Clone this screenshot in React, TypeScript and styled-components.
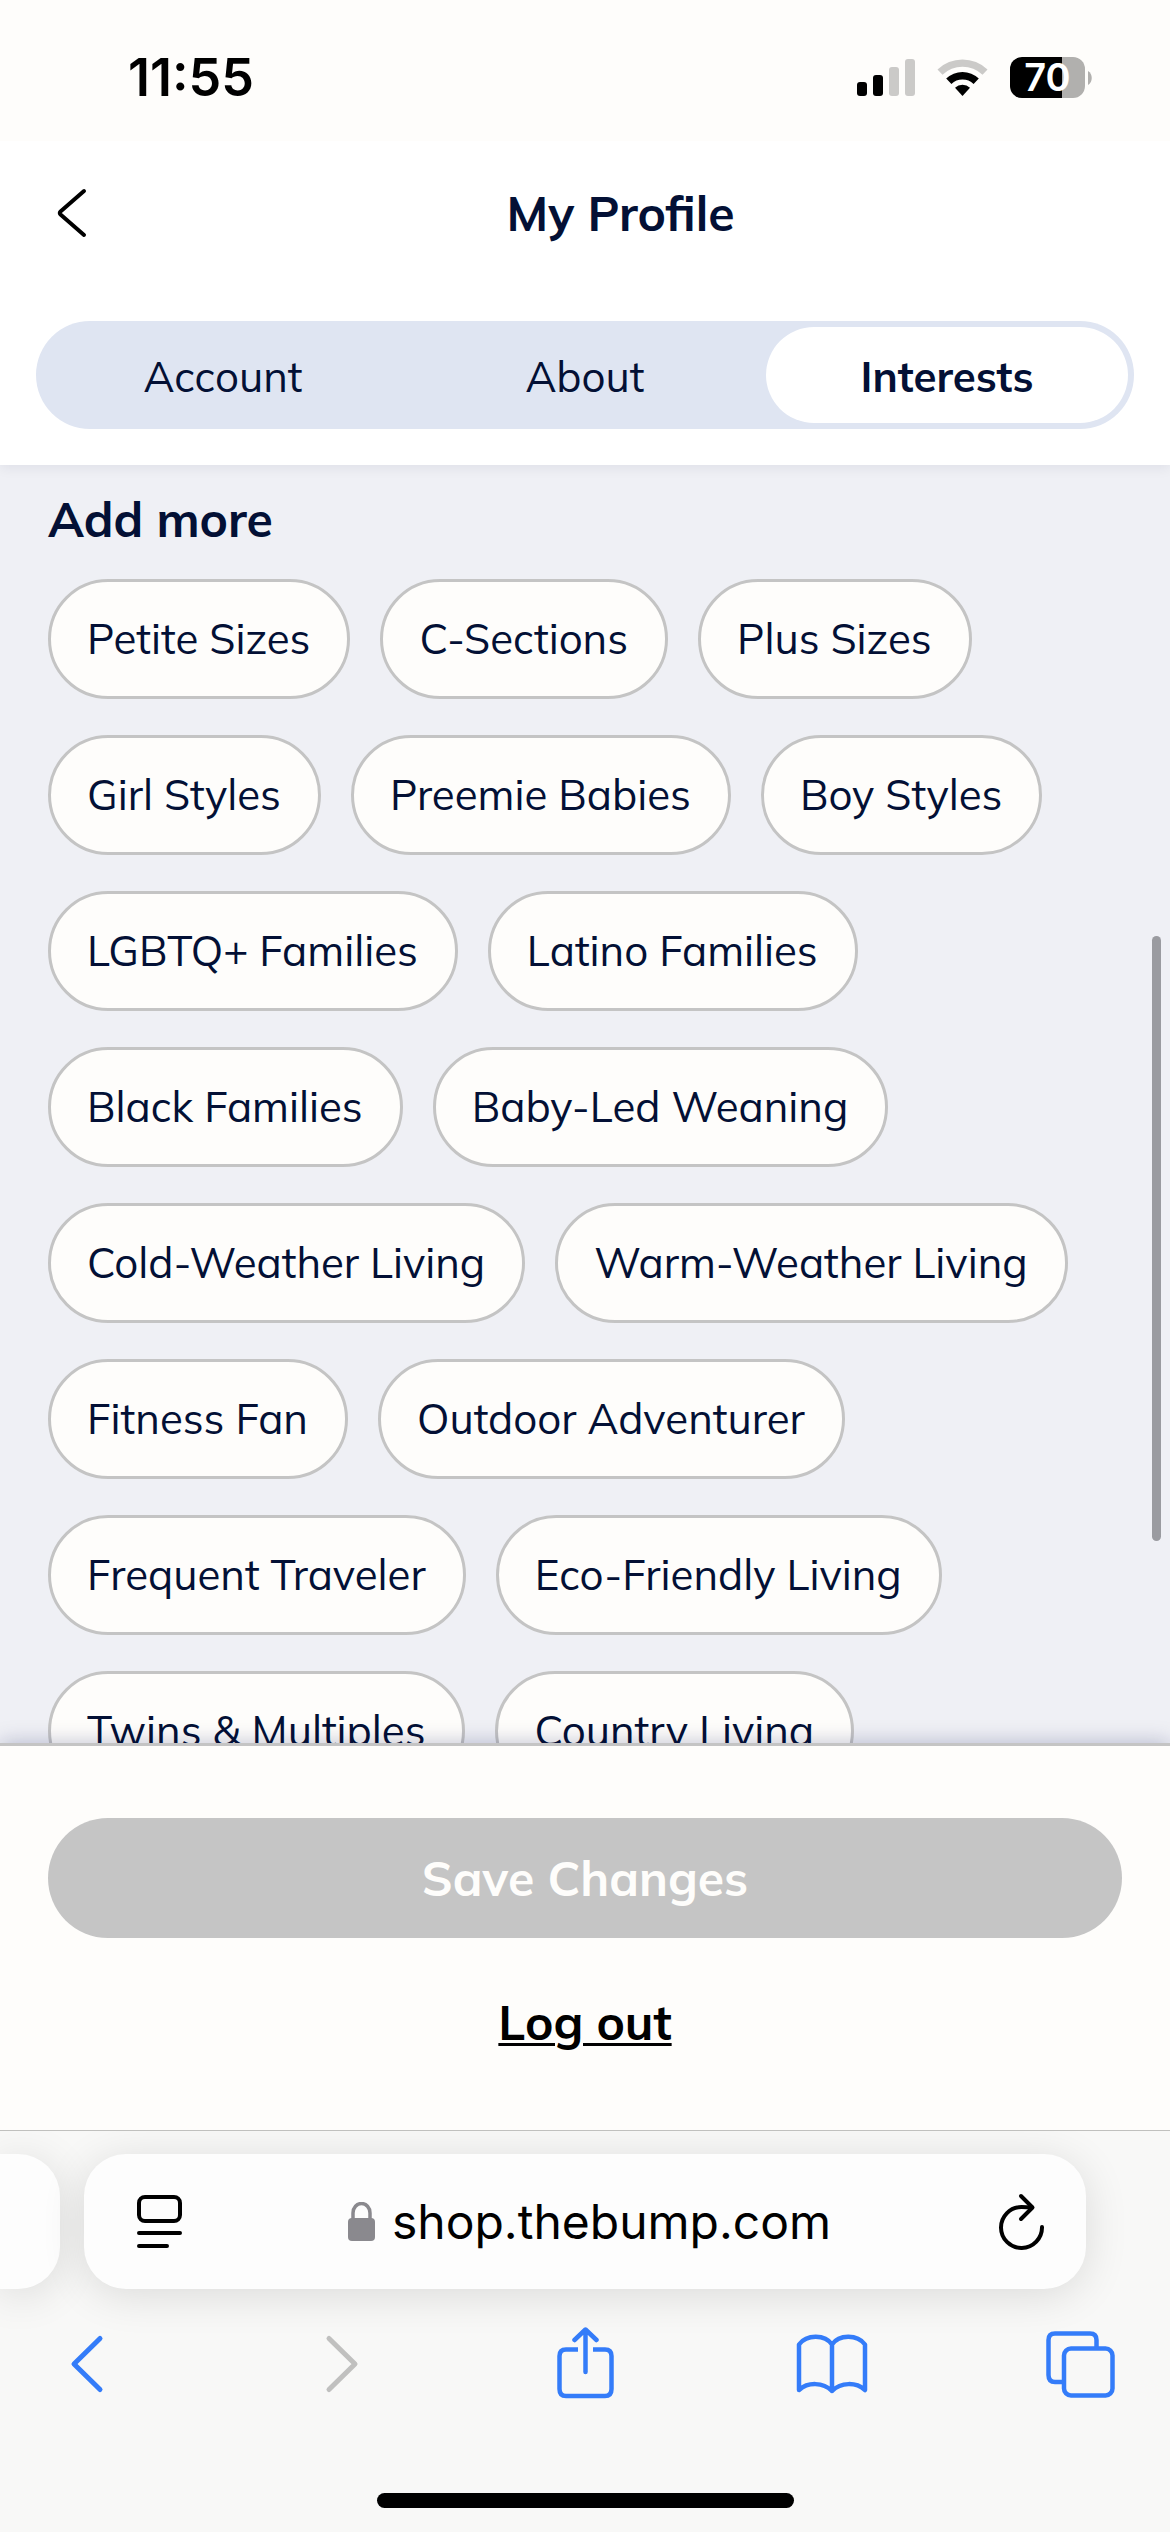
import React, { useState } from 'react';
import styled, { createGlobalStyle, css } from 'styled-components';

const brandFont = "Mulish, 'Open Sans', 'Noto Sans', sans-serif";
const systemFont = "Inter, 'Liberation Sans', sans-serif";

const color = {
  navy: '#031035',
  cream: '#fefdfb',
  border: '#c4c4c4',
  blue: '#347cf9',
  canvas: '#eff0f5',
};

const GlobalStyle = createGlobalStyle`
  *, *::before, *::after { box-sizing: border-box; }
  body { margin: 0; background: ${color.cream}; }
  button { font: inherit; color: inherit; margin: 0; padding: 0; border: 0; background: none; }
  svg { display: block; flex: none; }
`;

const Page = styled.div`
  display: flex;
  flex-direction: column;
  height: 100vh;
  color: ${color.navy};
  font-family: ${brandFont};
`;

const StatusBar = styled.div`
  flex: none;
  position: relative;
  z-index: 2;
  display: flex;
  align-items: center;
  justify-content: space-between;
  height: 141px;
  padding: 14px 78px 0 128px;
  background: ${color.cream};
  color: #000;
  font-family: ${systemFont};
`;

const Clock = styled.time`
  font-size: 52px;
  font-weight: 600;
  line-height: 60px;
`;

const StatusIcons = styled.div`
  display: flex;
  align-items: center;
  gap: 22px;
`;

const Battery = styled.div`
  display: flex;
  align-items: center;
  gap: 3px;
`;

const BatteryBody = styled.div`
  display: flex;
  align-items: center;
  justify-content: center;
  width: 75px;
  height: 41px;
  border-radius: 12px;
  background: linear-gradient(to right, #000 70%, #b1b0ae 70%);
  color: #fff;
  font-size: 38px;
  font-weight: 600;
  line-height: 41px;
`;

const Header = styled.header`
  flex: none;
  position: relative;
  z-index: 1;
  padding: 0 36px 36px;
  background: #fff;
  box-shadow: 0 3px 12px rgba(3, 16, 53, 0.07);
`;

const TitleRow = styled.div`
  display: flex;
  align-items: center;
  height: 144px;
  margin-bottom: 36px;
`;

const BackButton = styled.button`
  display: flex;
  align-items: center;
  width: 71px;
  height: 72px;
  padding-left: 20px;
  color: #000;
`;

const Title = styled.h1`
  flex: 1;
  margin: 0;
  font-size: 48px;
  font-weight: 700;
  line-height: 66px;
  text-align: center;
`;

const Tabs = styled.div`
  display: flex;
  height: 108px;
  padding: 6px;
  border-radius: 54px;
  background: #dfe5f2;
`;

const Tab = styled.button<{ $active: boolean }>`
  flex: 1;
  padding-top: 3px;
  border-radius: 48px;
  font-size: 42px;
  font-weight: 400;
  line-height: 60px;
  ${({ $active }) =>
    $active &&
    css`
      background: #fff;
      font-weight: 700;
    `}
`;

const Content = styled.main`
  flex: 1;
  min-height: 0;
  position: relative;
  background: ${color.canvas};
`;

const Scroller = styled.div`
  height: 100%;
  padding: 21px 48px 36px;
  overflow-y: auto;
  scrollbar-width: none;
`;

const ScrollThumb = styled.div`
  position: absolute;
  top: 471px;
  right: 9px;
  width: 9px;
  height: 605px;
  border-radius: 5px;
  background: #9a9ba0;
`;

const SectionTitle = styled.h2`
  margin: 0 0 27px;
  font-size: 48px;
  font-weight: 700;
  line-height: 66px;
`;

const ChipList = styled.ul`
  display: flex;
  flex-wrap: wrap;
  gap: 36px 30px;
  margin: 0;
  padding: 0;
  list-style: none;
`;

const Chip = styled.button`
  display: block;
  height: 120px;
  padding: 0 37px 0 36px;
  border: 3px solid ${color.border};
  border-radius: 60px;
  background: ${color.cream};
  font-size: 42px;
  line-height: 60px;
  white-space: nowrap;
`;

const Footer = styled.footer`
  flex: none;
  position: relative;
  z-index: 1;
  display: flex;
  flex-direction: column;
  align-items: center;
  gap: 51px;
  padding: 72px 48px 75px;
  border-top: 3px solid ${color.border};
  background: ${color.cream};
  box-shadow: 0 0 20px rgba(3, 16, 80, 0.26);
`;

const SaveButton = styled.button`
  width: 100%;
  height: 120px;
  border-radius: 60px;
  background: #c5c5c5;
  color: ${color.cream};
  font-size: 48px;
  font-weight: 700;
  line-height: 66px;
`;

const LogOut = styled.a`
  color: #000;
  font-size: 48px;
  font-weight: 700;
  line-height: 66px;
  text-decoration: underline;
  text-decoration-thickness: 3px;
  text-underline-offset: 3px;
`;

const BrowserChrome = styled.div`
  flex: none;
  position: relative;
  z-index: 2;
  border-top: 1px solid #c0c0be;
  background: #f8f8f7;
  color: #000;
  font-family: ${systemFont};
  overflow: hidden;
`;

const AddressRow = styled.div`
  display: flex;
  gap: 24px;
  padding: 23px 84px 0 0;
`;

const AddressSurface = styled.div`
  height: 135px;
  background: #fdfdfd;
  box-shadow: 0 6px 44px rgba(0, 0, 0, 0.12);
`;

const PreviousTab = styled(AddressSurface)`
  width: 60px;
  border-radius: 0 42px 42px 0;
`;

const AddressBar = styled(AddressSurface)`
  flex: 1;
  display: flex;
  align-items: center;
  justify-content: space-between;
  padding: 0 41px 0 53px;
  border-radius: 42px;
`;

const Address = styled.button`
  display: flex;
  align-items: center;
  gap: 16px;
  font-size: 48px;
  line-height: 60px;
`;

const IconButton = styled.button`
  display: flex;
`;

const Toolbar = styled.nav`
  display: flex;
  justify-content: space-between;
  padding: 38px 54px 94px 51px;
  color: ${color.blue};

  button:disabled {
    color: #c0c0bf;
  }
`;

const HomeIndicator = styled.div`
  width: 417px;
  height: 15px;
  margin: 0 auto 24px;
  border-radius: 8px;
  background: #000;
`;

const SignalIcon = () => (
  <svg width="58" height="38" viewBox="0 0 58 38" aria-hidden="true">
    <rect x="0" y="23" width="10" height="14" rx="3" />
    <rect x="16" y="16" width="10" height="21" rx="3" />
    <rect x="32" y="8" width="10" height="29" rx="3" fill="#cbcac8" />
    <rect x="48" y="0" width="10" height="37" rx="3" fill="#cbcac8" />
  </svg>
);

const WifiIcon = () => (
  <svg width="51" height="38" viewBox="0 0 51 38" aria-hidden="true">
    <path d="M0.5 10.5 A36 36 0 0 1 50.5 10.5 L45.5 15.8 A29 29 0 0 0 5.5 15.8 Z" fill="#cbcac8" />
    <path d="M9.2 19.6 A23.5 23.5 0 0 1 41.8 19.6 L36.6 25 A16 16 0 0 0 14.4 25 Z" />
    <path d="M18 28.8 A11 11 0 0 1 33 28.8 L25.5 37 Z" />
  </svg>
);

const BatteryNub = () => (
  <svg width="4" height="14" viewBox="0 0 4 14" aria-hidden="true">
    <path d="M0 0 C5 3 5 11 0 14 Z" fill="#b1b0ae" />
  </svg>
);

const stroke = (width: number) => ({
  fill: 'none',
  stroke: 'currentColor',
  strokeWidth: width,
  strokeLinecap: 'round' as const,
  strokeLinejoin: 'round' as const,
});

const HeaderBackIcon = () => (
  <svg width="32" height="50" viewBox="0 0 32 50" aria-hidden="true">
    <path d="M28 3 L4.5 23.5 Q3 25 4.5 26.5 L28 47" {...stroke(4)} />
  </svg>
);

const ReaderIcon = () => (
  <svg width="46" height="54" viewBox="0 0 46 54" aria-hidden="true">
    <rect x="2" y="2" width="41" height="24" rx="6" {...stroke(4)} />
    <path d="M2 38 H43 M2 51 H30" {...stroke(4)} />
  </svg>
);

const LockIcon = () => (
  <svg width="28" height="40" viewBox="0 0 28 40" aria-hidden="true">
    <rect x="0" y="16" width="27" height="23" rx="4" fill="#8a898e" />
    <path d="M5 18 V11 A8.5 9.5 0 0 1 22 11 V18" fill="none" stroke="#8a898e" strokeWidth="3.5" />
  </svg>
);

const ReloadIcon = () => (
  <svg width="49" height="60" viewBox="-3 0 49 60" aria-hidden="true">
    <path d="M43 35 A20.5 20.5 0 1 1 22.5 15 Q28 15 33 15.5" {...stroke(4)} />
    <path d="M22 4 L33.5 15.5 L22 27" {...stroke(4)} />
  </svg>
);

const BackIcon = () => (
  <svg width="72" height="72" viewBox="0 0 72 72" aria-hidden="true">
    <path d="M49 11.5 L23 37 L49 62.5" {...stroke(5)} />
  </svg>
);

const ForwardIcon = () => (
  <svg width="72" height="72" viewBox="0 0 72 72" aria-hidden="true">
    <path d="M30 11.5 L56 37 L30 62.5" {...stroke(5)} />
  </svg>
);

const ShareIcon = () => (
  <svg width="72" height="72" viewBox="0 0 72 72" aria-hidden="true">
    <path
      d="M30 22.5 H18 Q11.5 22.5 11.5 29 V62 Q11.5 69 18 69 H57 Q63.5 69 63.5 62 V29 Q63.5 22.5 57 22.5 H45"
      {...stroke(4.5)}
      strokeLinecap="butt"
    />
    <path d="M37.5 45 V3 M26.5 13 L37.5 2.5 L48.5 13" {...stroke(4.5)} />
  </svg>
);

const BookIcon = () => (
  <svg width="72" height="72" viewBox="0 0 72 72" aria-hidden="true">
    <path
      d="M36 17.5 C29 7.5 11 7 3 17.5 V63 C12 55 27 55 36 64 C45 55 60 55 69 63 V17.5 C61 7 43 7.5 36 17.5 V64"
      {...stroke(4.5)}
    />
  </svg>
);

const TabsIcon = () => (
  <svg width="72" height="72" viewBox="0 0 72 72" aria-hidden="true">
    <path
      d="M18 55 H11 Q4.5 55 4.5 48 V13 Q4.5 6.5 11 6.5 H46 Q52.5 6.5 52.5 13 V20"
      {...stroke(4.5)}
      strokeLinecap="butt"
    />
    <rect x="20" y="21.5" width="48.5" height="47" rx="7" {...stroke(4.5)} />
  </svg>
);

const tabs = ['Account', 'About', 'Interests'];

const interests = [
  'Petite Sizes',
  'C-Sections',
  'Plus Sizes',
  'Girl Styles',
  'Preemie Babies',
  'Boy Styles',
  'LGBTQ+ Families',
  'Latino Families',
  'Black Families',
  'Baby-Led Weaning',
  'Cold-Weather Living',
  'Warm-Weather Living',
  'Fitness Fan',
  'Outdoor Adventurer',
  'Frequent Traveler',
  'Eco-Friendly Living',
  'Twins & Multiples',
  'Country Living',
];

export default function App() {
  const [activeTab, setActiveTab] = useState('Interests');

  return (
    <Page>
      <GlobalStyle />
      <StatusBar>
        <Clock>11:55</Clock>
        <StatusIcons>
          <SignalIcon />
          <WifiIcon />
          <Battery>
            <BatteryBody>70</BatteryBody>
            <BatteryNub />
          </Battery>
        </StatusIcons>
      </StatusBar>

      <Header>
        <TitleRow>
          <BackButton type="button" aria-label="Back">
            <HeaderBackIcon />
          </BackButton>
          <Title>My Profile</Title>
        </TitleRow>
        <Tabs role="tablist">
          {tabs.map((tab) => (
            <Tab
              key={tab}
              type="button"
              role="tab"
              aria-selected={tab === activeTab}
              $active={tab === activeTab}
              onClick={() => setActiveTab(tab)}
            >
              {tab}
            </Tab>
          ))}
        </Tabs>
      </Header>

      <Content>
        <Scroller>
          <SectionTitle>Add more</SectionTitle>
          <ChipList>
            {interests.map((interest) => (
              <li key={interest}>
                <Chip type="button">{interest}</Chip>
              </li>
            ))}
          </ChipList>
        </Scroller>
        <ScrollThumb />
      </Content>

      <Footer>
        <SaveButton type="button" disabled>
          Save Changes
        </SaveButton>
        <LogOut href="#logout">Log out</LogOut>
      </Footer>

      <BrowserChrome>
        <AddressRow>
          <PreviousTab />
          <AddressBar>
            <IconButton type="button" aria-label="Page menu">
              <ReaderIcon />
            </IconButton>
            <Address type="button">
              <LockIcon />
              shop.thebump.com
            </Address>
            <IconButton type="button" aria-label="Reload">
              <ReloadIcon />
            </IconButton>
          </AddressBar>
        </AddressRow>
        <Toolbar aria-label="Browser">
          <IconButton type="button" aria-label="Previous page">
            <BackIcon />
          </IconButton>
          <IconButton type="button" aria-label="Next page" disabled>
            <ForwardIcon />
          </IconButton>
          <IconButton type="button" aria-label="Share">
            <ShareIcon />
          </IconButton>
          <IconButton type="button" aria-label="Bookmarks">
            <BookIcon />
          </IconButton>
          <IconButton type="button" aria-label="Tabs">
            <TabsIcon />
          </IconButton>
        </Toolbar>
        <HomeIndicator />
      </BrowserChrome>
    </Page>
  );
}
